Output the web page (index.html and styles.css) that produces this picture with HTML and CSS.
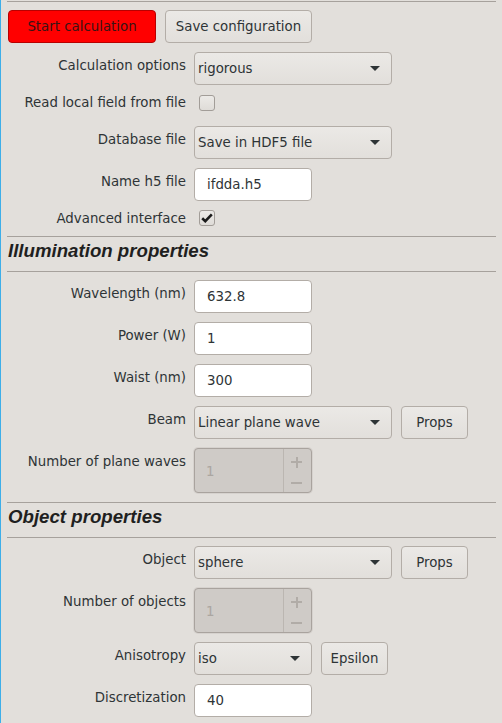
FILE: index.html
```html
<!DOCTYPE html>
<html>
<head>
<meta charset="utf-8">
<link rel="stylesheet" href="styles.css">
</head>
<body>
<div class="panel">
  <div class="sep"></div>
  <div class="form">
    <div class="btnrow">
      <button class="btn btn-red">Start calculation</button>
      <button class="btn btn-save">Save configuration</button>
    </div>
    <div class="row">
      <span class="lbl">Calculation options</span>
      <div class="combo wide"><span>rigorous</span><span class="arrow"></span></div>
    </div>
    <div class="row chkrow first">
      <span class="lbl">Read local field from file</span>
      <span class="chk"></span>
    </div>
    <div class="row">
      <span class="lbl">Database file</span>
      <div class="combo wide"><span>Save in HDF5 file</span><span class="arrow"></span></div>
    </div>
    <div class="row">
      <span class="lbl">Name h5 file</span>
      <div class="entry">ifdda.h5</div>
    </div>
    <div class="row chkrow last">
      <span class="lbl">Advanced interface</span>
      <span class="chk checked"><svg width="12" height="10" viewBox="0 0 12 10"><path d="M1.2 5.2 L4.3 8.2 L10.8 1.4" fill="none" stroke="#1b1b1b" stroke-width="2.6" stroke-linejoin="miter"/></svg></span>
    </div>
    <div class="section">
      <div class="sep"></div>
      <div class="heading">Illumination properties</div>
      <div class="sep"></div>
    </div>
    <div class="row">
      <span class="lbl">Wavelength (nm)</span>
      <div class="entry">632.8</div>
    </div>
    <div class="row">
      <span class="lbl">Power (W)</span>
      <div class="entry">1</div>
    </div>
    <div class="row">
      <span class="lbl">Waist (nm)</span>
      <div class="entry">300</div>
    </div>
    <div class="row">
      <span class="lbl">Beam</span>
      <div class="fieldgroup">
        <div class="combo wide"><span>Linear plane wave</span><span class="arrow"></span></div>
        <button class="btn btn-small">Props</button>
      </div>
    </div>
    <div class="row">
      <span class="lbl">Number of plane waves</span>
      <div class="spin"><span class="spinval">1</span><span class="spinbtns"><span class="plus"></span><span class="minus"></span></span></div>
    </div>
    <div class="section">
      <div class="sep"></div>
      <div class="heading">Object properties</div>
      <div class="sep"></div>
    </div>
    <div class="row">
      <span class="lbl">Object</span>
      <div class="fieldgroup">
        <div class="combo wide"><span>sphere</span><span class="arrow"></span></div>
        <button class="btn btn-small">Props</button>
      </div>
    </div>
    <div class="row">
      <span class="lbl">Number of objects</span>
      <div class="spin"><span class="spinval">1</span><span class="spinbtns"><span class="plus"></span><span class="minus"></span></span></div>
    </div>
    <div class="row">
      <span class="lbl">Anisotropy</span>
      <div class="fieldgroup">
        <div class="combo narrow"><span>iso</span><span class="arrow"></span></div>
        <button class="btn btn-small">Epsilon</button>
      </div>
    </div>
    <div class="row">
      <span class="lbl">Discretization</span>
      <div class="entry">40</div>
    </div>
  </div>
</div>
</body>
</html>
```
FILE: styles.css
```css
html, body {
  margin: 0;
  padding: 0;
}
body {
  background: #e2dfdb;
  font-family: "DejaVu Sans", sans-serif;
  font-size: 13.33px;
  color: #2e3436;
  width: 502px;
  height: 723px;
  overflow: hidden;
}
.panel {
  border-left: 1px solid #3daee9;
  height: 723px;
  box-sizing: border-box;
  padding-top: 1px;
}
.sep {
  height: 1px;
  flex: none;
  background: #a6a19c;
  margin: 0 6px 0 6px;
}
.form {
  display: flex;
  flex-direction: column;
  gap: 9px;
  margin-top: 8px;
}
.btnrow {
  display: flex;
  gap: 9px;
  padding-left: 7px;
  height: 33px;
}
.btn {
  font-family: "DejaVu Sans", sans-serif;
  font-size: 13.33px;
  line-height: 16px;
  color: #2e3436;
  height: 33px;
  border: 1px solid #b3ada7;
  border-radius: 4px;
  background: linear-gradient(#ebe9e6, #e2dfdb);
  padding: 0;
  margin: 0;
  box-sizing: border-box;
  flex: none;
}
.btn-red {
  width: 148px;
  background: #ff0000;
  border-color: #b80000;
  color: #3a1414;
}
.btn-save {
  width: 147px;
}
.btn-small {
  width: 67px;
}
.row {
  display: flex;
  align-items: flex-start;
  gap: 8px;
  flex: none;
}
.lbl {
  width: 185px;
  flex: none;
  text-align: right;
  line-height: 17px;
  height: 17px;
  padding-top: 5px;
  white-space: nowrap;
}
.chkrow .lbl {
  padding-top: 0;
}
.chkrow.first {
  height: 23px;
}
.chkrow.last {
  height: 17px;
}
.chk {
  width: 16px;
  height: 16px;
  box-sizing: border-box;
  border: 1px solid #a29d98;
  border-radius: 3px;
  background: linear-gradient(#eceae7, #dfdcd8);
  margin-left: 5px;
  margin-top: 1px;
  display: flex;
  align-items: center;
  justify-content: center;
  flex: none;
}
.chk.checked {
  margin-top: 0;
}
.fieldgroup {
  display: flex;
  gap: 9px;
}
.combo {
  height: 33px;
  box-sizing: border-box;
  border: 1px solid #b3ada7;
  border-radius: 4px;
  background: linear-gradient(#ebe9e6, #e2dfdb);
  display: flex;
  align-items: center;
  justify-content: space-between;
  padding: 0 11px 0 3px;
  flex: none;
}
.combo.wide {
  width: 198px;
}
.combo.narrow {
  width: 118px;
}
.arrow {
  width: 0;
  height: 0;
  border-left: 5px solid transparent;
  border-right: 5px solid transparent;
  border-top: 5px solid #2e3436;
}
.entry {
  width: 118px;
  height: 33px;
  box-sizing: border-box;
  border: 1px solid #b3ada7;
  border-radius: 4px;
  background: #ffffff;
  display: flex;
  align-items: center;
  padding-left: 12px;
  flex: none;
}
.spin {
  width: 118px;
  height: 45px;
  box-sizing: border-box;
  border: 1px solid #a9a39e;
  border-radius: 4px;
  background: #cfcbc7;
  box-shadow: 0 0 0 1px #d6d2ce;
  display: flex;
  color: #aba6a1;
  flex: none;
  overflow: hidden;
}
.spinval {
  flex: 1;
  display: flex;
  align-items: center;
  padding-left: 11px;
  padding-top: 1px;
}
.spinbtns {
  width: 27px;
  border-left: 1px solid #bbb6b1;
  position: relative;
}
.plus, .minus {
  position: absolute;
  left: 7px;
  width: 11px;
  height: 2px;
  background: #b1aca7;
}
.plus {
  top: 12px;
}
.plus::after {
  content: "";
  position: absolute;
  left: 4.5px;
  top: -4.5px;
  width: 2px;
  height: 11px;
  background: #b1aca7;
}
.minus {
  top: 33px;
}
.section {
  display: flex;
  flex-direction: column;
  flex: none;
  margin-bottom: -1px;
}
.heading {
  height: 34px;
  box-sizing: border-box;
  padding-left: 7px;
  line-height: 28px;
  padding-bottom: 6px;
  font-family: "Liberation Sans", Arial, sans-serif;
  font-weight: bold;
  font-style: italic;
  font-size: 18.67px;
  color: #1f1f1f;
}
```
